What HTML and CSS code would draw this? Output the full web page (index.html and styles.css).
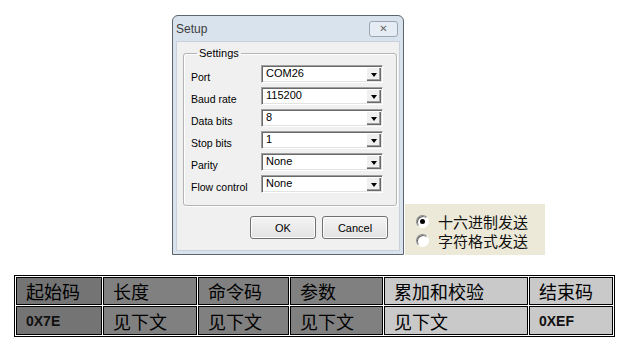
FILE: index.html
```html
<!DOCTYPE html>
<html lang="zh">
<head>
  <meta charset="UTF-8" />
  <title>Setup</title>
  <link rel="stylesheet" href="styles.css">
</head>
<body>

  <div class="top">
    <div class="window">
      <div class="titlebar">
        <span class="title">Setup</span>
        <span class="close">&#x2715;</span>
      </div>
      <div class="client">
        <fieldset class="group">
          <legend>Settings</legend>
          <div class="rows">
            <label>Port</label>
            <div class="combo"><span class="value">COM26</span><span class="drop"><i></i></span></div>
            <label>Baud rate</label>
            <div class="combo"><span class="value">115200</span><span class="drop"><i></i></span></div>
            <label>Data bits</label>
            <div class="combo"><span class="value">8</span><span class="drop"><i></i></span></div>
            <label>Stop bits</label>
            <div class="combo"><span class="value">1</span><span class="drop"><i></i></span></div>
            <label>Parity</label>
            <div class="combo"><span class="value">None</span><span class="drop"><i></i></span></div>
            <label>Flow control</label>
            <div class="combo"><span class="value">None</span><span class="drop"><i></i></span></div>
          </div>
        </fieldset>
        <div class="actions">
          <button>OK</button>
          <button>Cancel</button>
        </div>
      </div>
    </div>

    <div class="send-mode">
      <div class="option"><span class="radio checked"></span>十六进制发送</div>
      <div class="option"><span class="radio"></span>字符格式发送</div>
    </div>
  </div>

  <table class="frame">
    <colgroup>
      <col class="c1"><col class="c2"><col class="c3"><col class="c4"><col class="c5"><col class="c6">
    </colgroup>
    <tr>
      <td class="dark">起始码</td>
      <td class="mid">长度</td>
      <td class="mid">命令码</td>
      <td class="mid">参数</td>
      <td class="light">累加和校验</td>
      <td class="light">结束码</td>
    </tr>
    <tr>
      <td class="dark hex">0X7E</td>
      <td class="mid">见下文</td>
      <td class="mid">见下文</td>
      <td class="mid">见下文</td>
      <td class="light">见下文</td>
      <td class="light hex">0XEF</td>
    </tr>
  </table>

</body>
</html>
```

FILE: styles.css
```css
body {
  margin: 0;
  background: #fff;
  font-family: "Liberation Sans", Arial, sans-serif;
}

.top {
  display: flex;
  align-items: flex-end;
  padding: 15px 0 0 172px;
}

/* dialog window */
.window {
  width: 232px;
  height: 240px;
  box-sizing: border-box;
  border: 1px solid #5c6670;
  border-radius: 6px 6px 0 0;
  background: #d9e3ee;
  padding: 0 3px 3px;
  display: flex;
  flex-direction: column;
}

.titlebar {
  height: 25px;
  display: flex;
  align-items: center;
  justify-content: space-between;
  padding: 0 2px 0 0;
}

.title {
  font-size: 12px;
  color: #3c3c3c;
}

.close {
  width: 27px;
  height: 14px;
  border: 1px solid #9aa6b4;
  border-radius: 3px;
  background: #e6ecf3;
  color: #6a6a6a;
  font-size: 10px;
  line-height: 14px;
  text-align: center;
  font-family: "DejaVu Sans", sans-serif;
  font-weight: bold;
}

.client {
  flex: 1;
  background: #f0f0f0;
  border: 1px solid #c9d0da;
  padding: 5px 2px 0 6px;
}

.group {
  margin: 0;
  padding: 6px 7px 12px;
  border: 1px solid #b4b4b4;
  border-radius: 3px;
  box-shadow: 1px 1px 0 #fff, inset 1px 1px 0 #fff;
}

.group legend {
  font-size: 11px;
  padding: 0 2px;
  margin-left: 6px;
  color: #000;
}

.rows {
  display: grid;
  grid-template-columns: 70px 122px;
  grid-auto-rows: 18px;
  row-gap: 4px;
  align-items: center;
  font-size: 11px;
}

.rows label {
  padding-top: 5px;
  font-size: 10.5px;
}

.combo {
  display: flex;
  height: 18px;
  box-sizing: border-box;
  border: 1px solid;
  border-color: #a0a0a0 #fff #fff #a0a0a0;
  box-shadow: inset 1px 1px 0 #696969, inset -1px -1px 0 #e3e3e3;
  background: #fff;
  padding: 1px;
}

.combo .value {
  flex: 1;
  padding-left: 3px;
  line-height: 12px;
}

.combo .drop {
  width: 15px;
  background: #f0f0f0;
  box-shadow: inset 1px 1px 0 #fff, inset -1px -1px 0 #696969, inset -2px -2px 0 #a0a0a0;
  display: flex;
  align-items: center;
  justify-content: center;
}

.combo .drop i {
  width: 0;
  height: 0;
  border-left: 3px solid transparent;
  border-right: 3px solid transparent;
  border-top: 4px solid #000;
  margin-top: 1px;
}

.actions {
  display: flex;
  justify-content: flex-end;
  gap: 6px;
  margin-top: 10px;
  padding-right: 9px;
}

.actions button {
  width: 66px;
  height: 23px;
  font-family: "Liberation Sans", Arial, sans-serif;
  font-size: 11px;
  color: #000;
  border: 1px solid #707070;
  border-radius: 3px;
  background: linear-gradient(#f4f4f4, #e2e2e2);
  box-shadow: inset 0 0 0 1px #fcfcfc;
}

/* radio panel */
.send-mode {
  width: 140px;
  height: 51px;
  box-sizing: border-box;
  margin-left: 1px;
  background: #ece9d8;
  padding: 8px 0 0 11px;
  font-family: "Noto Sans CJK SC", sans-serif;
  font-size: 15px;
  color: #111;
}

.option {
  display: flex;
  align-items: center;
  gap: 9px;
  height: 19px;
}

.radio {
  width: 11px;
  height: 11px;
  border-radius: 50%;
  border: 1px solid;
  border-color: #8a8a8a #fff #fff #8a8a8a;
  background: #fff;
  box-shadow: inset 1px 1px 0 #6a6a6a;
  position: relative;
}

.radio.checked::after {
  content: "";
  position: absolute;
  left: 3px;
  top: 3px;
  width: 5px;
  height: 5px;
  border-radius: 50%;
  background: #000;
}

/* frame table */
.frame {
  margin: 20px 0 0 14px;
  width: 601px;
  table-layout: fixed;
  border-collapse: separate;
  border-spacing: 1px;
  border: 1px solid #000;
  font-family: "Noto Sans CJK SC", sans-serif;
  font-size: 18px;
  color: #000;
}

.frame col.c1 { width: 86px; }
.frame col.c2 { width: 94px; }
.frame col.c3 { width: 91px; }
.frame col.c4 { width: 93px; }
.frame col.c5 { width: 144px; }
.frame col.c6 { width: 84px; }

.frame td {
  border: 1px solid #000;
  padding: 0 0 0 9px;
  height: 26px;
  line-height: 26px;
  white-space: nowrap;
}

.frame tr + tr td {
  height: 27px;
}

.frame td.dark { background: #747474; }
.frame td.mid { background: #808080; }
.frame td.light { background: #c9c9c9; }

.frame td.hex {
  font-family: "Liberation Sans", Arial, sans-serif;
  font-weight: bold;
  font-size: 14px;
  color: #111;
}
```
